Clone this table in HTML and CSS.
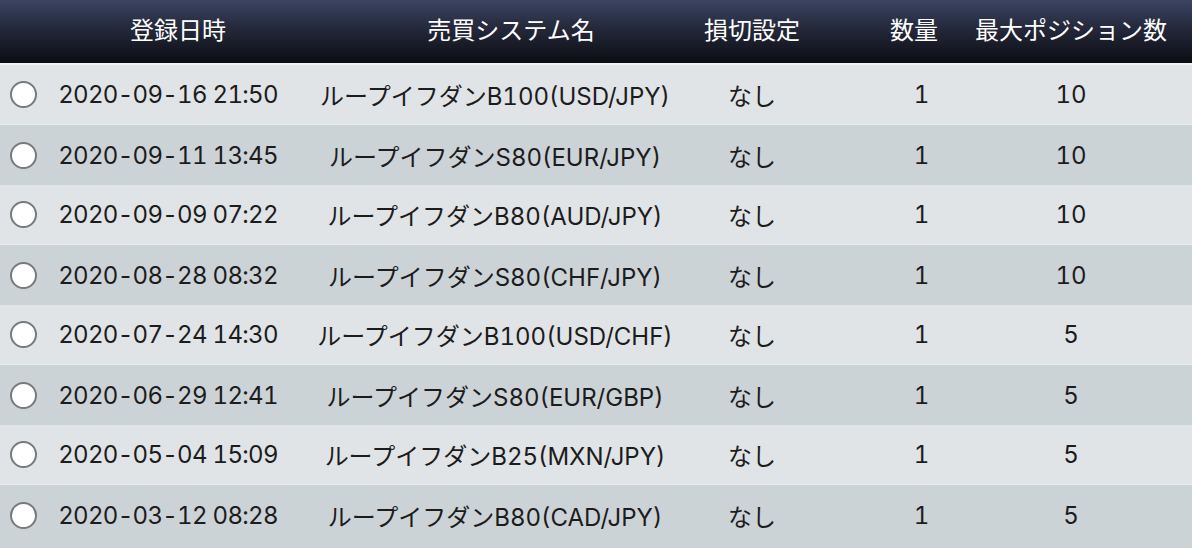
FILE: index.html
```html
<!DOCTYPE html>
<html lang="ja">
<head>
<meta charset="utf-8">
<link rel="stylesheet" href="styles.css">
</head>
<body>
<div class="table">
  <div class="head">
    <div class="c"></div>
    <div class="c hdate">登録日時</div>
    <div class="c hname">売買システム名</div>
    <div class="c">損切設定</div>
    <div class="c qty hqty">数量</div>
    <div class="c max">最大ポジション数</div>
  </div>
  <div class="row light"><div class="c"><span class="radio"></span></div><div class="c date">2020-09-16 21:50</div><div class="c name">ループイフダンB100(USD/JPY)</div><div class="c">なし</div><div class="c qty">1</div><div class="c max">10</div></div>
  <div class="row dark"><div class="c"><span class="radio"></span></div><div class="c date">2020-09-11 13:45</div><div class="c name">ループイフダンS80(EUR/JPY)</div><div class="c">なし</div><div class="c qty">1</div><div class="c max">10</div></div>
  <div class="row light"><div class="c"><span class="radio"></span></div><div class="c date">2020-09-09 07:22</div><div class="c name">ループイフダンB80(AUD/JPY)</div><div class="c">なし</div><div class="c qty">1</div><div class="c max">10</div></div>
  <div class="row dark"><div class="c"><span class="radio"></span></div><div class="c date">2020-08-28 08:32</div><div class="c name">ループイフダンS80(CHF/JPY)</div><div class="c">なし</div><div class="c qty">1</div><div class="c max">10</div></div>
  <div class="row light"><div class="c"><span class="radio"></span></div><div class="c date">2020-07-24 14:30</div><div class="c name">ループイフダンB100(USD/CHF)</div><div class="c">なし</div><div class="c qty">1</div><div class="c max">5</div></div>
  <div class="row dark"><div class="c"><span class="radio"></span></div><div class="c date">2020-06-29 12:41</div><div class="c name">ループイフダンS80(EUR/GBP)</div><div class="c">なし</div><div class="c qty">1</div><div class="c max">5</div></div>
  <div class="row light"><div class="c"><span class="radio"></span></div><div class="c date">2020-05-04 15:09</div><div class="c name">ループイフダンB25(MXN/JPY)</div><div class="c">なし</div><div class="c qty">1</div><div class="c max">5</div></div>
  <div class="row dark"><div class="c"><span class="radio"></span></div><div class="c date">2020-03-12 08:28</div><div class="c name">ループイフダンB80(CAD/JPY)</div><div class="c">なし</div><div class="c qty">1</div><div class="c max">5</div></div>
</div>
</body>
</html>
```

FILE: styles.css
```css
html, body {
  margin: 0;
  padding: 0;
  background: #ccd3d7;
}
body {
  font-family: Inter, "Noto Sans CJK JP", sans-serif;
  font-size: 24px;
  color: #1c1c1c;
  font-variant-numeric: tabular-nums;
}
.table {
  display: flex;
  flex-direction: column;
}
.head, .row {
  display: grid;
  grid-template-columns: 46px 244px 410px 104px 156px 232px;
  align-items: center;
}
.head {
  height: 63px;
  background: linear-gradient(#3c4462 0%, #262b3e 40%, #0c0d12 100%);
  color: #ffffff;
  border-bottom: 2px solid #f1f3f4;
}
.head .c {
  line-height: 1;
  padding-bottom: 2px;
}
.hdate {
  padding-left: 20px;
}
.hname {
  padding-left: 32px;
}
.row {
  height: 60px;
  box-sizing: border-box;
}
.light {
  background: #e1e4e6;
  border-bottom: 1px solid #eaedee;
}
.dark {
  background: #ccd3d7;
}
.c {
  text-align: center;
  white-space: nowrap;
}
.date {
  letter-spacing: -0.7px;
}
.qty {
  padding-left: 79px;
  width: 77px;
}
.head .hqty {
  padding-left: 64px;
  width: 92px;
}
.max {
  padding-right: 10px;
}
.radio {
  display: block;
  width: 23px;
  height: 23px;
  margin-left: 10px;
  border: 2px solid #777a7c;
  border-radius: 50%;
  background: #ffffff;
}
```
